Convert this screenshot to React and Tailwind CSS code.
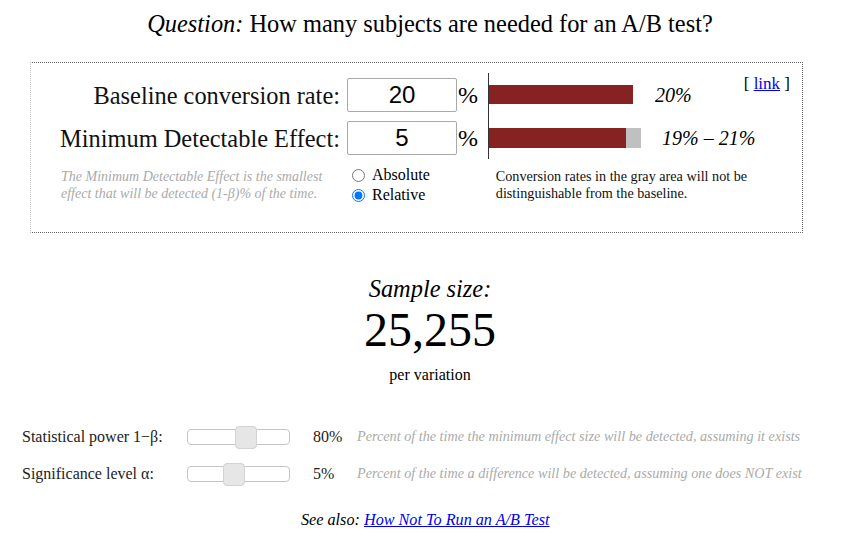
import React from 'react'

const serif = "[font-family:Liberation_Serif,Times_New_Roman,serif]"

const Slider = ({ thumb }) => (
  <div className="relative h-[16px] w-[103px] rounded-[4px] border border-[#c5c5c5] bg-white">
    {/* jquery-ui style handle */}
    <div
      className="absolute top-[-4px] h-[23px] w-[22px] rounded-[4px] border border-[#d3d3d3] bg-[#e6e6e6]"
      style={{ left: thumb }}
    />
  </div>
)

const ParamRow = ({ label, thumb, value, note, className }) => (
  <div className={`flex items-center pl-[22px] h-[24px] ${className}`}>
    <span className="w-[165px] text-[16px] text-[#222]">{label}</span>
    <Slider thumb={thumb} />
    <span className="ml-[23px] w-[44px] text-[16px] text-[#222]">{value}</span>
    <span className="whitespace-nowrap text-[14.2px] italic text-[#aaa]">{note}</span>
  </div>
)

const InputRow = ({ label, value }) => (
  <div className="flex h-[43px] items-center">
    <span className="mt-[4px] w-[309px] text-right text-[24.4px] leading-none text-[#111]">{label}</span>
    <input
      className="ml-[7px] h-[34px] w-[110px] rounded-[2px] border border-[#a9a9a9] text-center text-[24px] [font-family:Liberation_Sans,Arial,sans-serif] text-black outline-none"
      defaultValue={value}
    />
    <span className="w-[31px] pl-[1px] text-[24px] leading-none">%</span>
  </div>
)

export default function App() {
  return (
    <div className={`${serif} w-[860px] h-[543px] bg-white text-black`}>
      <h1 className="pt-[10px] text-center text-[24.4px] leading-[28px]">
        <i>Question:</i> How many subjects are needed for an A/B test?
      </h1>

      <div className="ml-[30px] mt-[24px] h-[171px] w-[773px] border border-dotted border-[#666] border-l-[#ccc] pt-[10px]">
        <div className="flex">
          <div className="shrink-0">
            <InputRow label="Baseline conversion rate:" value="20" />
            <InputRow label="Minimum Detectable Effect:" value="5" />
          </div>
          <div className="flex min-w-0 flex-1 border-l border-[#333]">
            <div className="flex min-w-0 flex-1 flex-col">
              <div className="flex h-[43px] items-center">
                <div className="h-[19px] w-[144px] shrink-0 bg-[#862222]" />
                <span className="ml-[22px] shrink-0 text-[20px] italic whitespace-nowrap">20%</span>
              </div>
              <div className="flex h-[43px] items-center">
                <div className="h-[20px] w-[137px] shrink-0 bg-[#862222]" />
                <div className="h-[20px] w-[15px] shrink-0 bg-[#c0c0c0]" />
                <span className="ml-[21px] shrink-0 text-[20px] italic whitespace-nowrap">19% – 21%</span>
              </div>
            </div>
            <div className="mr-[12px] mt-[1px] shrink-0 whitespace-nowrap text-[17px] leading-[20px]">
              [ <a href="#" className="text-[#0000ee] underline">link</a> ]
            </div>
          </div>
        </div>

        <div className="mt-[9px] flex">
          <p className="ml-[30px] w-[275px] text-[14px] italic leading-[17px] text-[#aaa]">
            The Minimum Detectable Effect is the smallest effect that will be detected (1-β)% of the time.
          </p>
          <div className="-mt-[3px] ml-[16px] flex flex-col text-[16px] leading-[20px]">
            <label className="flex items-center">
              <input type="radio" name="mode" className="m-0 h-[13px] w-[13px]" />
              <span className="ml-[7px]">Absolute</span>
            </label>
            <label className="flex items-center">
              <input type="radio" name="mode" defaultChecked className="m-0 h-[13px] w-[13px]" />
              <span className="ml-[7px]">Relative</span>
            </label>
          </div>
          <p className="ml-[66px] w-[275px] text-[14.2px] leading-[17px] text-[#111]">
            Conversion rates in the gray area will not be distinguishable from the baseline.
          </p>
        </div>
      </div>

      <div className="mt-[42px] text-center">
        <div className="text-[24.4px] italic leading-[28px]">Sample size:</div>
        <div className="mt-[1px] text-[48px] leading-[52px]">25,255</div>
        <div className="mt-[10px] text-[16px] leading-[18px]">per variation</div>
      </div>

      <ParamRow
        className="mt-[41px]"
        label="Statistical power 1−β:"
        thumb="47px"
        value="80%"
        note="Percent of the time the minimum effect size will be detected, assuming it exists"
      />
      <ParamRow
        className="mt-[13px]"
        label="Significance level α:"
        thumb="35px"
        value="5%"
        note="Percent of the time a difference will be detected, assuming one does NOT exist"
      />

      <p className="mt-[25px] pl-[301px] text-[16.2px] italic leading-[18px]">
        See also: <a href="#" className="text-[#0000ee] underline">How Not To Run an A/B Test</a>
      </p>
    </div>
  )
}
